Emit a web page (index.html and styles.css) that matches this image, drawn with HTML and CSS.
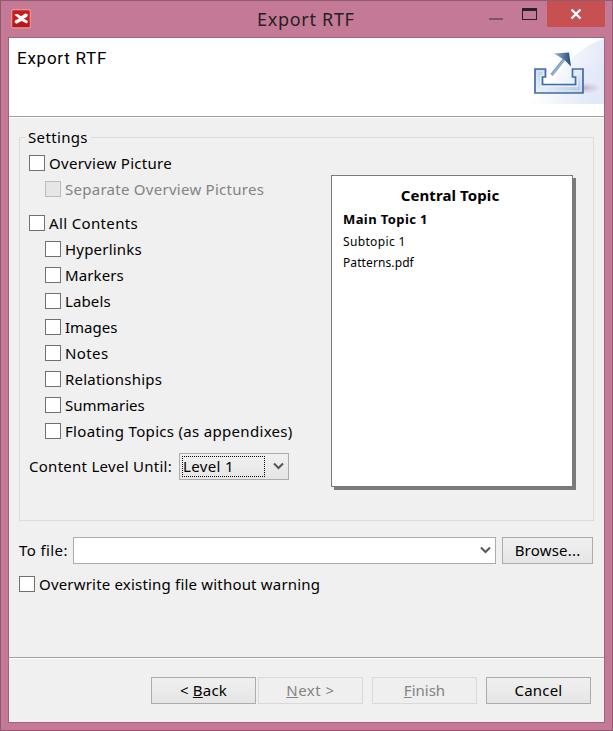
FILE: index.html
```html
<!DOCTYPE html>
<html lang="en">
<head>
<meta charset="utf-8">
<title>Export RTF</title>
<link rel="stylesheet" href="styles.css">
</head>
<body>
<div class="window">
  <header class="titlebar">
    <svg class="app-icon" width="20" height="20" viewBox="0 0 20 20">
      <rect x=".7" y=".7" width="18.6" height="18.2" rx="2" fill="#c81c1c" stroke="#e39a93" stroke-width="1.2"/>
      <path d="M1.500 12h17v6h-17z" fill="#a81212" opacity=".5"/>
      <path d="M3.200 5.500 6.500 5 10.200 7.200 14.500 4.300 17 5.500 16 8 12.800 9.500 17 12.200 16 14.500 10.500 12 5.500 14.800 3.500 13.500 4 11.500 8 9.600Z" fill="#fff"/>
    </svg>
    <h1 class="window-title">Export RTF</h1>
    <div class="window-controls">
      <svg class="control" width="30" height="25" viewBox="0 0 30 25"><path d="M2 17h14v2H2z" fill="#82566a"/></svg>
      <svg class="control" width="30" height="25" viewBox="0 0 30 25" shape-rendering="crispEdges"><path d="M5 7h15v12H5zM6 10v8h13v-8z" fill="#242424" fill-rule="evenodd"/></svg>
      <div class="close"><svg width="12" height="10" viewBox="0 0 12 10"><path d="M1.500.5 10.500 9.500M10.500.5 1.500 9.500" stroke="#fff" stroke-width="2.300"/></svg></div>
    </div>
  </header>
  <main class="client">
    <section class="banner">
      <h2 class="banner-title">Export RTF</h2>
      <svg class="banner-art" width="75" height="66" viewBox="0 0 75 66">
        <defs>
          <linearGradient id="sky" x1="0" x2="1" y1=".3" y2=".5"><stop offset=".1" stop-color="#e6ecf9" stop-opacity="0"/><stop offset="1" stop-color="#e1e8f8"/></linearGradient>
          <linearGradient id="metal" x1="0" x2="1" y2="1"><stop stop-color="#b9cce6"/><stop offset=".5" stop-color="#e6eef9"/><stop offset="1" stop-color="#a9c1e0"/></linearGradient>
          <linearGradient id="arrow" x1="0" x2="1"><stop stop-color="#9eb8d6"/><stop offset="1" stop-color="#24477d"/></linearGradient>
          <radialGradient id="shade"><stop stop-color="#b8a4b8" stop-opacity=".8"/><stop offset="1" stop-color="#c8b8ca" stop-opacity="0"/></radialGradient>
        </defs>
        <path d="M0 66C26 49 37 12 75 1V66Z" fill="url(#sky)"/>
        <path d="M20 66C35 35 54 25 75 22V66Z" fill="url(#sky)" opacity=".75"/>
        <ellipse cx="55" cy="50" rx="17" ry="6" fill="url(#shade)"/>
        <path d="M6 31H16.500V39H13.500V46.500H46.500V39H43.500V31H54V55H6Z" fill="url(#metal)" stroke="#426ca8" stroke-width="1.700"/>
        <path d="M8 33H14.500V37.500H11.500V48.500H48.500V37.500H45.500V33H52V53H8Z" fill="none" stroke="#e6eef9"/>
        <path d="M22.500 37 35 21.500" stroke="#7898c0" stroke-width="2.800"/>
        <path d="M23 36.500 35 22" stroke="#b9cbe2" stroke-width=".8"/>
        <path d="M25 15.500 40 14.500 42 28.500 35.500 22Z" fill="url(#arrow)"/>
      </svg>
    </section>
    <section class="page">
      <fieldset class="settings">
        <legend class="settings-title"><span class="t-settings">Settings</span></legend>
        <div class="options">
          <label class="option"><i class="box"></i><span class="t-overview">Overview Picture</span></label>
          <label class="option nested disabled"><i class="box"></i><span class="t-separate">Separate Overview Pictures</span></label>
          <label class="option group-start"><i class="box"></i><span class="t-all">All Contents</span></label>
          <label class="option nested"><i class="box"></i><span class="t-hyper">Hyperlinks</span></label>
          <label class="option nested"><i class="box"></i><span class="t-markers">Markers</span></label>
          <label class="option nested"><i class="box"></i><span class="t-labels">Labels</span></label>
          <label class="option nested"><i class="box"></i><span class="t-images">Images</span></label>
          <label class="option nested"><i class="box"></i><span class="t-notes">Notes</span></label>
          <label class="option nested"><i class="box"></i><span class="t-relations">Relationships</span></label>
          <label class="option nested"><i class="box"></i><span class="t-summaries">Summaries</span></label>
          <label class="option nested"><i class="box"></i><span class="t-floating">Floating Topics (as appendixes)</span></label>
          <div class="level">
            <span class="level-label"><span class="t-level">Content Level Until:</span></span>
            <div class="level-select"><span class="level-value">Level 1</span><svg class="chevron" width="11" height="9" viewBox="0 0 11 9"><path d="M1 1.500 5.500 6 10 1.500" fill="none" stroke="#555" stroke-width="2"/></svg></div>
          </div>
        </div>
        <div class="preview">
          <p class="preview-title">Central Topic</p>
          <p class="preview-main">Main Topic 1</p>
          <p class="preview-sub t-subtopic">Subtopic 1</p>
          <p class="preview-sub t-patterns">Patterns.pdf</p>
        </div>
      </fieldset>
      <div class="file-row">
        <span class="file-label">To file:</span>
        <div class="file-select"><svg class="chevron" width="11" height="9" viewBox="0 0 11 9"><path d="M1 1.500 5.500 6 10 1.500" fill="none" stroke="#555" stroke-width="2"/></svg></div>
        <button class="button browse">Browse...</button>
      </div>
      <label class="option overwrite"><i class="box"></i><span class="t-overwrite">Overwrite existing file without warning</span></label>
    </section>
    <footer class="actions">
      <button class="button back">&lt; <u>B</u>ack</button>
      <button class="button next" disabled><u>N</u>ext &gt;</button>
      <button class="button finish" disabled><u>F</u>inish</button>
      <button class="button cancel">Cancel</button>
    </footer>
  </main>
</div>
</body>
</html>
```

FILE: styles.css
```css
* { box-sizing: border-box; }
body {
  margin: 0;
  font: 15px/20px "Noto Sans", "Open Sans", sans-serif;
  color: #000;
}
.window {
  width: 613px;
  height: 731px;
  padding: 0 7px 7px;
  border: 1px solid #925a70;
  background: #c47a96;
}
.titlebar {
  display: flex;
  position: relative;
  height: 36px;
  align-items: flex-start;
  justify-content: space-between;
}
.app-icon { margin: 8px 0 0 3px; }
.window-title {
  position: absolute;
  left: 249px;
  top: 6px;
  margin: 0;
  font-size: 18px;
  line-height: 24px;
  font-weight: 400;
  letter-spacing: .7px;
  color: #222;
}
.window-controls { display: flex; }
.control { display: block; }
.close {
  display: flex;
  width: 58px;
  height: 26px;
  align-items: center;
  justify-content: center;
  background: #c75050;
}
.client {
  display: flex;
  flex-direction: column;
  width: 597px;
  height: 686px;
  border: 1px solid #a1637b;
  background: #f0f0f0;
}
.banner {
  display: flex;
  height: 79px;
  flex: none;
  justify-content: space-between;
  border-bottom: 1px solid #a0a0a0;
  background: #fff;
}
.banner-title {
  margin: 10px 0 0 8px;
  font: 400 17px/20px Roboto, sans-serif;
  letter-spacing: .75px;
}
.page {
  height: 541px;
  padding: 12px 10px 0;
  border-top: 1px solid #fff;
  border-bottom: 1px solid #a0a0a0;
}
.settings {
  display: flex;
  position: relative;
  height: 391px;
  margin: 0;
  padding: 5px 20px 0 9px;
  border: 1px solid #dcdcdc;
  justify-content: space-between;
}
.settings-title { height: 15px; margin-left: -4px; padding: 0 3px; line-height: 15px; letter-spacing: .35px; }
.options { display: flex; flex-direction: column; }
.option {
  display: flex;
  height: 26px;
  align-items: center;
  gap: 4px;
  white-space: nowrap;
}
.nested { margin-left: 16px; }
.group-start { margin-top: 8px; }
.box {
  width: 16px;
  height: 16px;
  flex: none;
  border: 1px solid #707070;
  background: #fff;
}
.disabled { color: #838383; }
.disabled .box { border-color: #bcbcbc; background: #e6e6e6; }
.t-overview { letter-spacing: .28px; }
.t-separate { letter-spacing: .27px; }
.t-all { letter-spacing: .36px; }
.t-hyper { letter-spacing: .2px; }
.t-markers, .t-labels { letter-spacing: .12px; }
.t-notes { letter-spacing: .4px; }
.t-relations { letter-spacing: .2px; }
.t-floating { letter-spacing: .31px; }
.t-level { letter-spacing: .27px; }
.t-overwrite { letter-spacing: .19px; }
.level { display: flex; margin-top: 9px; align-items: center; }
.level-label { width: 150px; padding-bottom: 2px; }
.level-select, .button {
  border: 1px solid #acacac;
  background: linear-gradient(#f0f0f0, #e5e5e5);
}
.level-select {
  display: flex;
  width: 110px;
  height: 27px;
  padding: 0 4px 0 2px;
  align-items: center;
  justify-content: space-between;
}
.level-value {
  width: 83px;
  height: 21px;
  border: 1px dotted #000;
  line-height: 18px;
  letter-spacing: .35px;
}
.preview {
  width: 242px;
  height: 312px;
  margin-top: 25px;
  padding: 8px 10px 8px 11px;
  border: 1px solid #7a7a7a;
  background: #fff;
  box-shadow: 3px 3px 0 #7a7a7a;
}
.preview p { margin: 0; }
.preview .preview-title { margin-left: -5px; font-weight: 700; text-align: center; line-height: 23px; letter-spacing: .1px; }
.preview-main { font-size: 13px; font-weight: 700; line-height: 24px; letter-spacing: .4px; }
.preview-sub { font-size: 12px; line-height: 21px; }
.t-subtopic { letter-spacing: .35px; }
.t-patterns { letter-spacing: .1px; }
.file-row { display: flex; margin-top: 16px; align-items: center; }
.file-label { width: 54px; padding-bottom: 2px; letter-spacing: .4px; }
.file-select {
  display: flex;
  width: 423px;
  height: 27px;
  padding-right: 4px;
  align-items: center;
  justify-content: flex-end;
  border: 1px solid #acacac;
  background: #fff;
}
.button {
  width: 105px;
  height: 27px;
  padding: 0 0 2px;
  font: inherit;
  line-height: 22px;
  letter-spacing: .2px;
  color: #000;
}
.button:disabled { border-color: #d9d9d9; background: #efefef; color: #838383; }
.browse { width: 91px; margin-left: 6px; }
.overwrite { margin-top: 7px; }
.actions {
  display: flex;
  flex: 1;
  padding: 18px 13px 0 0;
  border-top: 1px solid #fff;
  justify-content: flex-end;
}
.next { margin-left: 2px; letter-spacing: .5px; }
.finish, .cancel { margin-left: 9px; }
.finish { letter-spacing: 0; }
```
